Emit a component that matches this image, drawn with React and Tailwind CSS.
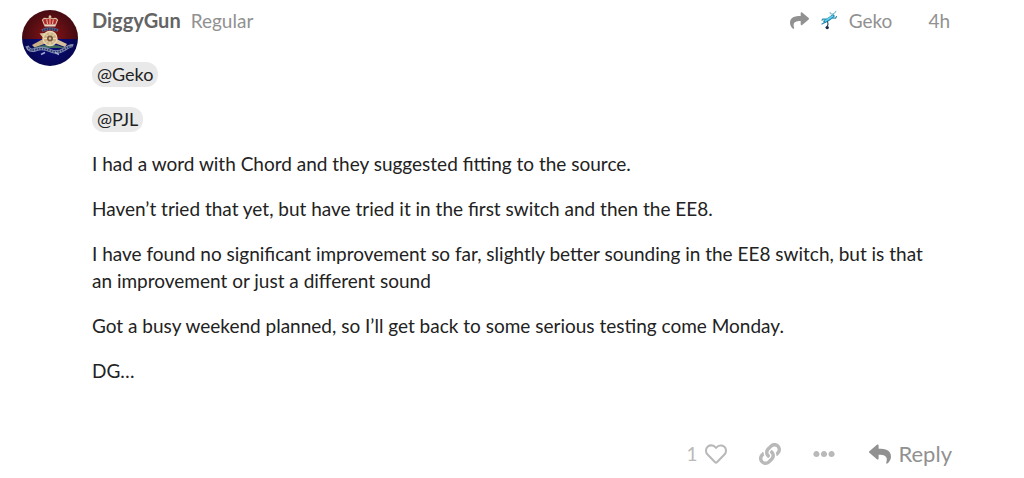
import { FaEllipsisH, FaLink, FaRegHeart, FaReply, FaShare } from "react-icons/fa";

const post = {
  author: "DiggyGun",
  title: "Regular",
  age: "4h",
  likes: 1,
  replyTo: "Geko",
  mentions: ["Geko", "PJL"],
  paragraphs: [
    "I had a word with Chord and they suggested fitting to the source.",
    "Haven’t tried that yet, but have tried it in the first switch and then the EE8.",
    "I have found no significant improvement so far, slightly better sounding in the EE8 switch, but is that an improvement or just a different sound",
    "Got a busy weekend planned, so I’ll get back to some serious testing come Monday.",
    "DG…",
  ],
};

function RegimentAvatar() {
  return (
    <svg viewBox="0 0 56 56" className="size-14" aria-hidden="true">
      <defs>
        <clipPath id="avatar-clip">
          <circle cx="28" cy="28" r="28" />
        </clipPath>
        <radialGradient id="avatar-red" gradientUnits="userSpaceOnUse" cx="28" cy="26" r="30">
          <stop offset="0" stopColor="#8a1418" />
          <stop offset="1" stopColor="#3c0a10" />
        </radialGradient>
        <radialGradient id="avatar-blue" gradientUnits="userSpaceOnUse" cx="28" cy="30" r="30">
          <stop offset="0" stopColor="#0c0c86" />
          <stop offset="1" stopColor="#06064c" />
        </radialGradient>
      </defs>
      <g clipPath="url(#avatar-clip)">
        <rect width="56" height="29" fill="url(#avatar-red)" />
        <rect y="29" width="56" height="27" fill="url(#avatar-blue)" />
      </g>
      {/* crown */}
      <path d="M22.5 15 L20.5 10 Q22 7.5 25 9 L28 7.5 L31 9 Q34 7.5 35.5 10 L33.5 15 Z" fill="#b3262b" stroke="#d9c3a0" strokeWidth="1.1" />
      <path d="M28 5 V14 M26.7 6.4 H29.3 M24.8 10 L25.5 14 M31.2 10 L30.5 14" stroke="#ecd9b4" strokeWidth="0.9" />
      <path d="M22.5 15.6 H33.5" stroke="#e8d8c4" strokeWidth="1.8" />
      {/* upper scroll */}
      <path d="M20 20.5 Q28 17 36 20.5" fill="none" stroke="#5c6488" strokeWidth="3" />
      <path d="M21 20.5 Q28 17.3 35 20.5" fill="none" stroke="#23264e" strokeWidth="1.4" strokeDasharray="1.5 1" />
      {/* gun and wheel */}
      <path d="M17.5 23.5 L22 23 L45 34 L43 37 L22 29 Z" fill="#d8c19a" />
      <path d="M22 28.5 L10 35 L12.5 37.5 L25 33 Z" fill="#cbb086" />
      <path d="M11 38 Q28 31 44 38 Z" fill="#3f6e5c" />
      <circle cx="28" cy="28.5" r="7" fill="#cdb286" stroke="#ead9b6" strokeWidth="1.3" />
      <path d="M28 22.5 V34.5 M22 28.5 H34 M23.8 24.3 L32.2 32.7 M32.2 24.3 L23.8 32.7" stroke="#efdfba" strokeWidth="0.9" />
      <circle cx="28" cy="28.5" r="3" fill="#76563f" />
      <circle cx="28" cy="28.5" r="1.2" fill="#d9c096" />
      {/* lower scroll */}
      <path d="M5 36 Q7 42 14 39.5 T28 40.5 T42 39.5 T51 36" fill="none" stroke="#7f8bb0" strokeWidth="3.6" />
      <path d="M6.5 37.5 Q8 41.5 14 39.5 T28 40.5 T42 39.5 T49.5 37.5" fill="none" stroke="#2b3668" strokeWidth="1.6" strokeDasharray="1.6 1" />
      <path d="M19 44.5 L23 42.5 M33 42.5 L37 44.5" stroke="#a3accb" strokeWidth="1.4" />
    </svg>
  );
}

function GekoAvatar() {
  return (
    <svg viewBox="0 0 20 20" className="size-5" fill="none" strokeLinecap="round" strokeLinejoin="round" aria-hidden="true">
      <path d="M11 2.5 Q10.5 4.6 13.5 4 T17 1.2" stroke="#6fb4cc" strokeWidth="1" />
      <path d="M14 6 L10 9 L6 11.4" stroke="#2487aa" strokeWidth="3.4" />
      <path d="M13.5 6.2 L10 8.6 L6.5 10.8" stroke="#5fd3ef" strokeWidth="1.8" />
      <path d="M13 8 L16.5 8.2 L17.5 6.6 M7 9.2 L4 9 L3 10.2 M5.6 12.4 L3 14" stroke="#2c8bae" strokeWidth="1.2" />
      <path d="M8.5 11.5 L9 14 L8.2 17" stroke="#284861" strokeWidth="1.1" />
      <circle cx="8.2" cy="17.6" r="1.7" fill="#1b2d4a" />
    </svg>
  );
}

export default function App() {
  return (
    <article className="flex gap-3.5 bg-white pt-2.5 pr-18 pl-5.5 font-['Lato',sans-serif] text-[19px] leading-[27px] text-[#222222]">
      <a href="#diggygun" aria-label={post.author} className="shrink-0 self-start">
        <RegimentAvatar />
      </a>

      <div className="min-w-0 flex-1">
        {/* Post meta */}
        <header className="flex h-5 items-center justify-between pr-0.5 text-[#919191]">
          <div className="flex items-center gap-2.5">
            <a href="#diggygun" className="text-xl font-bold text-[#646464]">{post.author}</a>
            <span>{post.title}</span>
          </div>
          <div className="flex items-center gap-9">
            <a href="#geko" className="flex items-center gap-2.5">
              <FaShare className="size-[19px]" />
              <GekoAvatar />
              <span>{post.replyTo}</span>
            </a>
            <a href="#post">{post.age}</a>
          </div>
        </header>

        {/* Post body */}
        <div className="mt-[30px] space-y-[18px] pr-4">
          {post.mentions.map((name) => (
            <p key={name}>
              <a href={`#${name}`} className="inline-block rounded-xl bg-[#e9e9e9] px-[5px] text-lg leading-[25px]">
                @{name}
              </a>
            </p>
          ))}
          {post.paragraphs.map((text) => (
            <p key={text}>{text}</p>
          ))}
        </div>

        {/* Post controls */}
        <footer className="mt-14 flex h-[27px] items-center justify-end text-[#b9b9b9]">
          <button type="button" aria-label="Like this post" className="flex items-center gap-2">
            {post.likes}
            <FaRegHeart className="size-[22px]" />
          </button>
          <button type="button" aria-label="Copy a link to this post" className="ml-8">
            <FaLink className="size-[22px]" />
          </button>
          <button type="button" aria-label="Show more" className="ml-8">
            <FaEllipsisH className="size-[22px]" />
          </button>
          <button type="button" className="ml-[34px] flex items-center gap-[7px] text-[22px] text-[#919191]">
            <FaReply className="size-[22px]" />
            Reply
          </button>
        </footer>
      </div>
    </article>
  );
}
